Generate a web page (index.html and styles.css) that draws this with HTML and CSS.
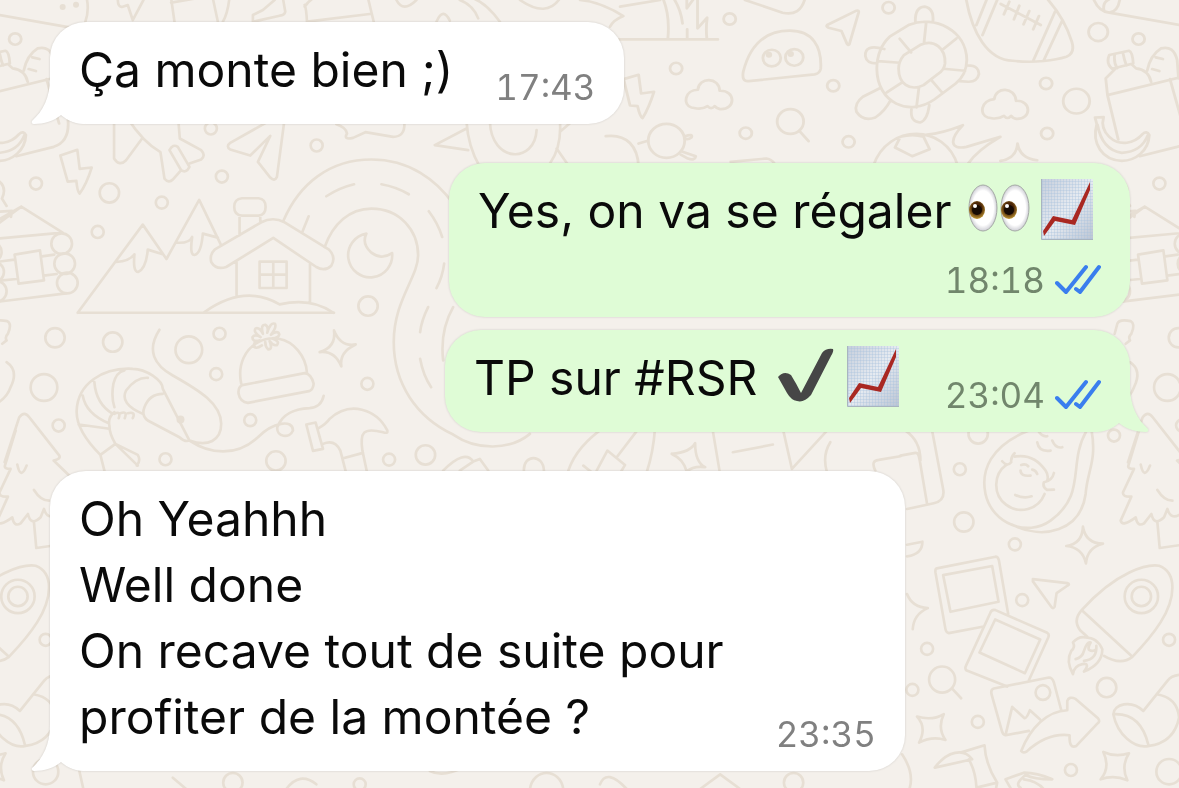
FILE: index.html
```
<!DOCTYPE html>
<html lang="fr">
<head>
  <meta charset="UTF-8" />
  <meta name="viewport" content="width=device-width, initial-scale=1.0" />
  <title>Discussion</title>
  <link rel="stylesheet" href="styles.css">
</head>
<body>
  <!-- doodle wallpaper, drawn at 3 units per pixel, repeats every 3366 units -->
  <svg class="wallpaper" viewBox="0 0 3537 2364" preserveAspectRatio="xMidYMin slice" aria-hidden="true">
    <defs>
      <g id="tile">
        <!-- left: mountains, house, road, hat, shrimp -->
        <g transform="translate(0 360)">
          <circle cx="634" cy="25" r="18"/><circle cx="951" cy="76" r="18"/><circle cx="667" cy="169" r="18"/>
          <circle cx="110" cy="190" r="18"/><circle cx="487" cy="247" r="18"/><circle cx="295" cy="335" r="18"/>
          <circle cx="660" cy="640" r="18"/><circle cx="650" cy="761" r="18"/><circle cx="1103" cy="790" r="18"/>
          <circle cx="752" cy="899" r="18"/><circle cx="178" cy="915" r="18"/><circle cx="498" cy="1016" r="18"/>
          <circle cx="1168" cy="1017" r="18"/><circle cx="330" cy="218" r="29"/><circle cx="1105" cy="557" r="29"/>
          <circle cx="167" cy="652" r="29"/><circle cx="340" cy="665" r="29"/><circle cx="829" cy="1021" r="29"/>
          <circle cx="1277" cy="1003" r="29"/><circle cx="568" cy="688" r="40"/><circle cx="134" cy="801" r="40"/>
          <path d="M183 106L234 89L241 146L277 142Q262 190 241 220Q234 215 231 182L205 184Z"/>
          <path d="M344 -10V115Q360 140 380 120L428 55M385 -5Q430 65 483 96L495 175Q508 190 520 178L543 152M535 -20L541 55L605 90Q620 105 605 118L570 130M510 90Q520 70 535 80L570 140Q560 160 545 150Z"/>
          <path d="M857 -20L832 170Q825 185 812 172L775 125L812 47L752 106L692 88Q678 78 692 68L840 -15"/>
          <path d="M1010 12Q1040 22 1042 40Q1030 60 1060 53L1097 36L1180 50Q1215 50 1214 10"/>
          <!-- cabin -->
          <path d="M-45 323L66 259L190 337L-30 357M-30 330L66 259M0 274L38 272L35 290M-5 180Q25 200 8 235L22 257M-10 425L45 418M-10 482L52 476M128 408L165 403M133 466L172 461M-20 546L200 519M46 403L122 390L134 480L58 490Z"/>
          <circle cx="187" cy="370" r="31"/><circle cx="196" cy="430" r="31"/><circle cx="204" cy="488" r="31"/>
          <circle cx="-24" cy="395" r="31"/><circle cx="-17" cy="455" r="31"/><circle cx="-9" cy="513" r="31"/>
          <!-- mountains and house -->
          <path d="M235 577L430 313L501 416L599 239L665 375M235 577H1003M350 425Q390 423 405 402Q400 455 416 455Q440 445 445 388L490 402M530 367Q570 370 578 350Q570 405 585 404Q605 400 610 340L655 352"/>
          <path d="M720 345V286M782 286V303M727 234H777Q798 236 798 260Q798 284 777 286H727Q704 284 704 260Q704 236 727 234ZM645 388L785 306Q820 288 855 306L988 388Q1010 410 995 436Q975 455 950 440L821 353L680 440Q650 450 635 425Q630 402 645 388ZM711 425V528M931 430V545M780 424H861V503H780ZM821 424V503M780 463H861M615 575Q735 490 840 552Q935 530 1001 577"/>
          <!-- road -->
          <path d="M852 300C900 190 990 118 1115 118C1230 118 1310 180 1360 250M975 380C1000 310 1050 265 1115 265C1200 265 1255 330 1255 405C1255 470 1182 540 1182 665C1182 790 1250 890 1360 942C1430 990 1530 990 1590 940M908 335L927 288M980 228Q1020 202 1063 192M1145 192Q1190 200 1227 222M1287 273Q1315 310 1327 350M1333 430Q1328 470 1310 503M1285 560Q1265 600 1261 635M1261 715Q1270 765 1294 800M1360 560Q1320 630 1330 720"/>
          <path d="M1100 340A66 66 0 1 0 1177 398Q1145 420 1115 397Q1085 370 1100 340Z"/>
          <!-- hat -->
          <path d="M725 790C700 670 830 610 895 690Q920 720 922 757M728 794L915 758Q935 760 942 790Q940 808 928 812L745 847Q722 845 717 820Q715 800 728 794ZM787 675Q765 690 763 673Q764 664 780 660Q757 665 759 650Q766 640 783 650Q760 635 768 624Q780 620 790 640Q782 613 797 613Q808 618 803 637Q812 605 826 610Q832 620 814 643Q835 628 839 642Q838 652 818 654Q842 662 832 674Q820 677 810 662Q820 687 806 687Q797 680 797 665"/>
          <path d="M1003 630Q1023 680 1068 672Q1018 695 1025 738Q1005 690 960 695Q1010 680 1003 630Z"/>
          <!-- shrimp -->
          <path d="M480 628C440 690 465 735 520 765C600 810 665 850 665 910C665 960 625 980 570 960M303 1003C250 950 230 910 232 870C235 790 310 740 400 745C440 745 490 780 490 805L570 960Q555 965 540 950L445 900Q425 885 435 860Q450 820 490 820M570 960C630 1000 710 1010 775 950C820 905 880 895 880 930C870 955 830 950 833 920C850 875 890 865 930 863Q965 860 972 826M430 880Q360 850 380 810Q410 770 445 772M345 860Q335 830 342 790Q350 755 375 750M340 880Q290 850 285 785M328 908Q260 880 250 825M238 912L325 924M345 875Q325 890 330 915Q330 940 348 970L303 1003L315 1050M348 970L415 1035M348 970L415 1003Q425 1020 412 1035M345 880Q365 870 358 893M363 878Q385 870 376 893M385 878Q410 872 400 893"/>
          <circle class="dot" cx="543" cy="897" r="12"/>
          <!-- hammer -->
          <path d="M920 912L948 906L970 985L940 991ZM957 923Q980 910 990 895C1050 840 1130 865 1163 930Q1165 940 1150 935C1090 920 1080 935 1088 990L1103 1060M970 970Q1005 955 1022 990L1040 1060M1028 1014L1090 997"/>
          <!-- fir tree -->
          <path d="M16 1025L60 890Q75 870 90 890L180 1005Q185 1015 163 1020L215 1070"/>
        </g>

        <!-- top edge, mostly covered by the first message -->
        <circle class="dot" cx="190" cy="21" r="9"/><circle class="dot" cx="230" cy="14" r="9"/>
        <path d="M262 -5Q270 30 258 65M355 -5Q355 25 370 20L385 15L400 60L432 0M515 -5L525 65M515 8L590 -5M640 -5L655 65M690 -10Q685 40 670 65M760 65V45L790 30L825 0M850 -5L857 35Q855 45 840 47L765 64M915 20Q925 5 940 -5M915 15Q920 25 922 65M922 65L1110 42M1105 -5L1122 65M1190 0Q1210 40 1250 0M1310 65Q1330 20 1350 62M1380 0Q1420 15 1435 55M1420 -5Q1460 10 1500 65M1560 0Q1640 55 1680 -5M1740 0Q1800 5 1870 48Q1840 60 1830 80M1860 20L1980 0"/>

        <!-- top right: jelly, turtle, ball, bag -->
        <g transform="translate(1860 0) scale(1.07 1)">
          <circle cx="307" cy="57" r="17"/><circle cx="752" cy="23" r="17"/><circle cx="157" cy="205" r="17"/>
          <circle cx="597" cy="257" r="17"/><circle cx="352" cy="399" r="17"/><circle cx="640" cy="425" r="17"/>
          <circle cx="1193" cy="250" r="17"/><circle cx="1196" cy="400" r="17"/><circle cx="1452" cy="117" r="17"/>
          <circle cx="1339" cy="96" r="27"/><circle cx="1278" cy="303" r="37"/>
          <path d="M-20 118H274M120 -5Q140 45 134 115M147 -10Q170 25 175 70M187 0V25L207 -5M188 88V115M217 0V85L244 53Q240 85 243 115M350 0L455 38Q505 50 518 -5"/>
          <path d="M345 215C365 130 410 92 475 92C540 92 565 140 562 205Q560 220 545 223L360 243Q340 245 345 215Z"/>
          <circle cx="425" cy="174" r="25"/><circle cx="488" cy="172" r="25"/>
          <circle class="dot" cx="417" cy="164" r="9"/><circle class="dot" cx="478" cy="162" r="9"/>
          <path d="M580 75L662 32Q670 30 668 38L642 133Q638 137 635 130L620 93L584 83Q576 79 580 75ZM10 237L52 224L59 280L95 275Q80 325 63 354Q56 350 49 318L28 316Z"/>
          <path d="M200 322C175 315 180 270 218 269C220 230 278 230 279 272C325 270 325 330 280 327Q270 325 265 318Q255 330 245 318Q232 327 215 325Z"/>
          <path d="M1030 352C1005 345 1010 300 1048 297C1052 258 1106 260 1109 302C1153 300 1153 358 1110 356Q1100 355 1095 347Q1085 360 1075 347Q1062 356 1045 355Z"/>
          <circle cx="477" cy="364" r="37"/><path d="M502 392L528 423"/>
          <!-- turtle -->
          <path d="M755 110L810 74C880 45 970 90 971 180Q970 225 940 250L880 298C810 350 720 310 719 205Q720 145 755 110ZM795 165L840 135C880 115 912 145 910 190Q908 210 890 222L850 255C810 275 780 250 780 205Q780 185 795 165ZM827 66Q825 22 853 20Q880 25 876 66M740 147C700 135 685 145 687 168Q690 190 719 190M970 196C1000 195 1005 210 1005 222Q1000 246 975 245L950 243M730 263L680 290Q655 310 662 335Q680 365 715 352Q740 335 758 300M816 328Q812 365 840 367Q860 362 866 315M783 116L815 157M857 70L851 130M942 115L902 150M723 183L783 188M905 206L966 212M870 238L900 275M837 262L830 322M790 247L747 277"/>
          <!-- rugby ball -->
          <path d="M968 -10C985 100 1030 180 1100 182C1160 190 1220 180 1250 170Q1275 160 1265 125Q1245 55 1195 -5M1028 -5L998 75M1058 -5L1015 105M1218 35L1158 180M1238 62L1187 180M1066 12L1178 75M1090 5L1075 43M1118 17L1103 58M1146 33L1130 73M1173 48L1157 88"/>
          <!-- bag and banana -->
          <path d="M1325 -5Q1340 35 1370 38L1620 85M1355 30Q1350 5 1375 -5M1370 38Q1395 35 1400 -5M1370 165L1425 152Q1435 155 1437 190L1378 206Q1360 190 1370 165ZM1385 163Q1382 190 1392 204M1408 157Q1412 180 1418 196M1388 205L1360 235L1365 285L1395 418M1365 285L1620 218M1432 192L1445 205Q1480 210 1487 245M1476 212Q1485 165 1515 145Q1550 135 1560 180L1564 235M1500 172L1520 177M1490 207L1510 213M1540 237L1575 370M1455 468L1560 440Q1605 425 1600 360"/>
          <path d="M1330 352L1354 351Q1345 385 1370 410C1400 440 1440 430 1463 402Q1475 390 1482 405C1480 450 1445 482 1405 482C1350 480 1320 430 1335 372ZM1337 374Q1350 450 1405 458Q1460 455 1478 405"/>
          <!-- planet and star -->
          <path d="M710 495C750 370 910 370 945 495M770 442L785 410Q820 400 850 410L867 447L818 468ZM860 403Q900 400 960 375C920 420 925 450 970 440L1065 410Q1000 450 975 490M1065 482Q1110 475 1113 430Q1120 475 1168 480M-40 408C20 400 50 440 52 500M52 430L78 422M182 408Q205 400 200 412Q190 420 180 415M175 455L212 468Q210 482 190 475L170 463M310 485L410 475Q425 478 432 490"/>
          <circle cx="130" cy="422" r="51"/>
        </g>
        <path d="M1305 435L1400 385M1305 435L1405 450M1400 365Q1405 440 1440 500M1470 365C1475 490 1605 490 1610 390M1680 365Q1685 440 1650 490M1670 445L1705 495M1680 395L1715 365"/>

        <!-- strip between the green and the last message -->
        <g transform="translate(1260 1275)">
          <path d="M70 135Q135 70 160 108L120 135M160 108L180 100L205 135M312 135C310 85 370 85 372 135M445 135Q470 60 560 0M530 135L562 75L615 118L602 140M590 95L655 10M705 5Q700 80 680 140M490 120L515 140M755 85Q810 80 825 53Q825 110 855 125Q820 120 800 138Q790 100 755 85M877 10L898 135M938 80L1058 57M1088 10L1115 130L1225 10M1230 50Q1205 90 1220 140M1365 135Q1350 105 1375 103L1440 92"/>
        </g>

        <!-- right: avocado, photos, rocket -->
        <g transform="translate(2700 1260)">
          <circle cx="178" cy="146" r="18"/><circle cx="640" cy="45" r="18"/><circle cx="343" cy="371" r="18"/>
          <circle cx="365" cy="538" r="18"/><circle cx="80" cy="684" r="18"/><circle cx="36" cy="807" r="18"/>
          <circle cx="805" cy="657" r="18"/><circle cx="232" cy="903" r="18"/><circle cx="511" cy="1047" r="18"/>
          <circle cx="233" cy="40" r="29"/><circle cx="190" cy="304" r="29"/><circle cx="618" cy="800" r="29"/>
          <circle cx="805" cy="1052" r="38"/>
          <path d="M20 265L100 248Q135 240 128 205L95 30M0 105L45 97Q55 95 58 120L80 250M15 30Q60 60 60 120M20 372L66 363Q66 400 20 407M20 520Q35 560 82 562Q40 580 37 625M385 30C270 75 240 150 255 220C275 310 380 350 450 300C560 220 500 130 558 30M572 25C590 120 560 150 555 220C540 330 430 360 335 312"/>
          <path d="M318 132A75 75 0 1 0 432 220M342 108Q400 98 435 150Q445 165 440 180"/>
          <path d="M305 122Q320 140 332 125Q330 110 342 98M360 150Q360 168 390 165M362 133Q375 128 383 137M395 147Q405 148 410 160M344 223Q370 235 393 227M460 157Q455 180 430 185Q425 200 440 208L460 207M410 65Q415 95 450 90M412 30Q425 50 440 47M455 60Q465 85 485 80"/>
          <path d="M547 318Q555 368 607 369Q560 380 556 428Q545 380 497 376Q545 370 547 318Z"/>
          <path d="M715 30L683 135Q680 145 700 145L667 215Q665 230 692 228L660 300Q665 320 705 290Q710 320 730 308L752 280Q760 318 790 290L800 265Q810 300 840 280M720 132Q730 180 748 135M770 208Q790 240 815 240M770 305L777 382L840 373"/>
          <path d="M109 443L285 408Q292 408 295 418L323 580M250 617L145 637Q137 636 135 625L105 455Q104 444 109 443M128 463L275 436L294 543L150 573ZM285 568L440 636Q447 640 443 650L385 778M320 797L197 748Q193 742 196 736L270 575Q275 565 285 568M284 596L419 656L373 757L237 695Z"/>
          <path d="M280 803L445 770Q455 770 460 785L482 868M385 930L315 943Q307 942 304 930L273 820Q270 806 280 803M316 938L335 858L372 892Q378 893 388 868L418 895M362 990C390 920 440 870 500 868V840Q505 825 525 834L592 892Q600 902 590 908L527 975Q505 985 507 943Q440 935 378 992Q368 998 362 990Z"/>
          <circle cx="427" cy="815" r="22"/>
          <path d="M397 475L500 487Q510 490 500 495L468 517L462 558Q458 566 452 558L397 482ZM155 803L182 832"/>
          <circle cx="125" cy="776" r="39"/>
          <path d="M543 568C650 450 740 430 775 435Q815 450 815 500C815 570 760 640 695 708Q660 735 610 705M543 568L695 708M543 568Q515 600 540 630L560 648"/>
          <circle cx="722" cy="527" r="50"/><circle cx="722" cy="527" r="29"/>
          <path d="M555 650Q590 650 605 685Q605 730 550 752Q570 725 545 730Q520 735 517 760Q495 720 512 690Q525 680 517 665Q535 645 555 650ZM525 715Q545 710 550 690Q560 660 570 665Q555 690 575 690Q590 690 587 675Q590 715 550 720"/>
          <path d="M638 880C640 850 690 835 728 870L800 780Q815 760 850 762M638 880C650 940 700 985 745 975Q820 965 835 890Q830 830 768 820M638 880Q720 875 743 972"/>
          <path d="M50 887Q95 900 130 880Q110 920 135 957Q95 945 56 965Q80 920 50 887ZM608 993Q645 1010 685 997Q660 1035 680 1078Q640 1060 600 1075Q630 1040 608 993Z"/>
          <path d="M103 1040C140 990 190 980 215 1015L103 1040M180 995L252 973Q255 1030 290 1085L285 1110M205 1015Q225 1050 228 1100L290 1085M315 1075L370 1055Q410 1055 455 1075Q400 1075 375 1062Q340 1090 360 1100M315 1075L335 1110M370 1075Q410 1080 430 1105M5 1000Q45 1060 25 1110"/>
        </g>

        <!-- boot behind the last sent message -->
        <path d="M3342 1000L3350 970Q3355 955 3390 962Q3405 970 3392 1000Q3382 1010 3388 1020L3375 1030M3388 1085Q3425 1110 3400 1160Q3390 1190 3360 1208"/>
        <!-- bottom edge -->
        <path d="M1290 2310Q1330 2330 1390 2300M1590 2364C1600 2300 1680 2300 1690 2364M1800 2350Q1820 2300 1880 2364M2100 2364L2160 2320L2220 2364M240 2310L252 2364M520 2330L560 2364M860 2364Q900 2310 950 2350"/>
        <circle cx="700" cy="2345" r="29"/><circle cx="1080" cy="2350" r="18"/><circle cx="2380" cy="2345" r="29"/>
      </g>
    </defs>
    <use href="#tile" x="-3366"/>
    <use href="#tile"/>
    <use href="#tile" x="3366"/>
  </svg>

  <!-- shared shapes -->
  <svg class="sprite" aria-hidden="true">
    <defs>
      <linearGradient id="paper" x1="0" y1="0" x2="1" y2="1">
        <stop offset="0" stop-color="#c6cedb"/>
        <stop offset=".5" stop-color="#e6ebf1"/>
        <stop offset="1" stop-color="#bcc5d3"/>
      </linearGradient>
      <radialGradient id="white" cx=".5" cy=".5" r=".5">
        <stop offset=".75" stop-color="#fff"/>
        <stop offset="1" stop-color="#cfcfd6"/>
      </radialGradient>
      <radialGradient id="iris" cx=".5" cy=".4" r=".6">
        <stop offset=".5" stop-color="#4a2508"/>
        <stop offset="1" stop-color="#c39a35"/>
      </radialGradient>
      <pattern id="grid" width="3" height="3" patternUnits="userSpaceOnUse">
        <path d="M0 0H3M0 0V3" stroke="#a9c2dd" stroke-width="1" stroke-opacity=".7"/>
      </pattern>
      <symbol id="chart" viewBox="0 0 62 62">
        <rect x="5" y="1" width="52" height="61" fill="url(#paper)"/>
        <rect x="5" y="1" width="52" height="61" fill="url(#grid)"/>
        <path d="M5.500 1V61.500H57" fill="none" stroke="#a9b4bf"/>
        <path d="M7 53L17 38L36 42L54 4V12L39 47L19 43L8 58Z" fill="#a92822"/>
      </symbol>
      <symbol id="eyes" viewBox="0 0 62 62">
        <g id="eye">
          <ellipse cx="15" cy="30" rx="14" ry="23" fill="url(#white)" stroke="#a5a9a6"/>
          <ellipse cx="9" cy="32" rx="8" ry="9" fill="url(#iris)"/>
          <circle cx="9" cy="32" r="5" fill="#170b04"/>
          <circle cx="7" cy="28" r="2" fill="#fff"/>
        </g>
        <use href="#eye" x="32"/>
      </symbol>
      <symbol id="check" viewBox="0 0 62 62">
        <path d="M4 32Q10 25 17 30Q22 38 27 48L48 8Q52 3 59 4Q60 6 57 11L37 50Q30 58 23 56Q17 55 13 48Z" fill="#464646"/>
      </symbol>
      <symbol id="ticks" viewBox="0 0 46 32">
        <path d="M2 19L11 28L31 3M21 25L25 28L44 3" fill="none" stroke="#3a7eee" stroke-width="4" stroke-linecap="round" stroke-linejoin="round"/>
      </symbol>
      <symbol id="tail" viewBox="0 0 54 46">
        <path d="M19 0C19 20 12 33 1 43Q0 46 3 46C13 46 23 43 30 37C37 43 45 46 54 46V0Z" fill="currentColor"/>
      </symbol>
    </defs>
  </svg>

  <main class="chat">
    <article class="bubble received">
      <p class="text">Ça monte bien ;)</p>
      <div class="meta"><time datetime="17:43">17:43</time></div>
      <svg class="tail" aria-hidden="true"><use href="#tail"/></svg>
    </article>

    <article class="bubble sent stacked">
      <p class="text">Yes, on va se régaler <svg class="emoji" role="img" aria-label="yeux"><use href="#eyes"/></svg><svg class="emoji" role="img" aria-label="courbe en hausse"><use href="#chart"/></svg></p>
      <div class="meta"><time datetime="18:18">18:18</time><svg class="ticks" role="img" aria-label="Lu"><use href="#ticks"/></svg></div>
    </article>

    <article class="bubble sent follow">
      <p class="text">TP sur #RSR <svg class="emoji" role="img" aria-label="coche"><use href="#check"/></svg><svg class="emoji" role="img" aria-label="courbe en hausse"><use href="#chart"/></svg></p>
      <div class="meta"><time datetime="23:04">23:04</time><svg class="ticks" role="img" aria-label="Lu"><use href="#ticks"/></svg></div>
      <svg class="tail" aria-hidden="true"><use href="#tail"/></svg>
    </article>

    <article class="bubble received long">
      <p class="text">Oh Yeahhh<br>Well done<br>On recave tout de suite pour<br>profiter de la montée ?</p>
      <div class="meta"><time datetime="23:35">23:35</time></div>
      <svg class="tail" aria-hidden="true"><use href="#tail"/></svg>
    </article>
  </main>
</body>
</html>
```
FILE: styles.css
```
* {
  box-sizing: border-box;
}
body {
  margin: 0;
  position: relative;
  background-color: #f4f0eb;
  font-family: Inter, "Liberation Sans", sans-serif;
  color: #0a0a0a;
}
.wallpaper {
  position: absolute;
  top: 0;
  left: 0;
  width: 100%;
  height: 100%;
  overflow: hidden;
  fill: none;
  stroke: #e7dfd4;
  stroke-width: 8px;
  stroke-linecap: round;
  stroke-linejoin: round;
}
.wallpaper .dot {
  fill: #e7dfd4;
  stroke: none;
}
.sprite {
  position: absolute;
  width: 0;
  height: 0;
}
.chat {
  position: relative;
  display: flex;
  flex-direction: column;
  align-items: flex-start;
  gap: 39px;
  min-height: 100vh;
  padding: 22px 49px 18px 50px;
}
.bubble {
  position: relative;
  display: flex;
  align-items: flex-end;
  gap: 42px;
  max-width: 860px;
  padding: 15px 29px 15px;
  border-radius: 36px;
  filter: drop-shadow(0 0 1px rgba(0, 0, 0, 0.15));
}
.received {
  background-color: #fff;
  color: #fff;
}
.sent {
  align-self: flex-end;
  gap: 38px;
  background-color: #dffcd6;
  color: #dffcd6;
}
.stacked {
  flex-direction: column;
  gap: 8px;
}
.follow {
  margin-top: -26px;
}
.long {
  gap: 52px;
}
.text {
  margin: 0;
  padding-bottom: 6px;
  font-size: 48px;
  line-height: 66px;
  color: #0a0a0a;
}
.emoji {
  width: 62px;
  height: 62px;
  margin: 0 3px;
  vertical-align: -12px;
}
.meta {
  display: flex;
  align-items: center;
  gap: 10px;
  margin-left: auto;
  font-size: 35px;
  font-variant-numeric: tabular-nums;
  line-height: 44px;
  color: #808080;
}
.sent .meta {
  color: #71866c;
}
.ticks {
  width: 46px;
  height: 32px;
}
/* sits between the bubble background and its content */
.tail {
  position: absolute;
  z-index: -1;
  bottom: 0;
  left: -19px;
  width: 54px;
  height: 46px;
}
.sent .tail {
  left: auto;
  right: -19px;
  transform: scaleX(-1);
}
```
